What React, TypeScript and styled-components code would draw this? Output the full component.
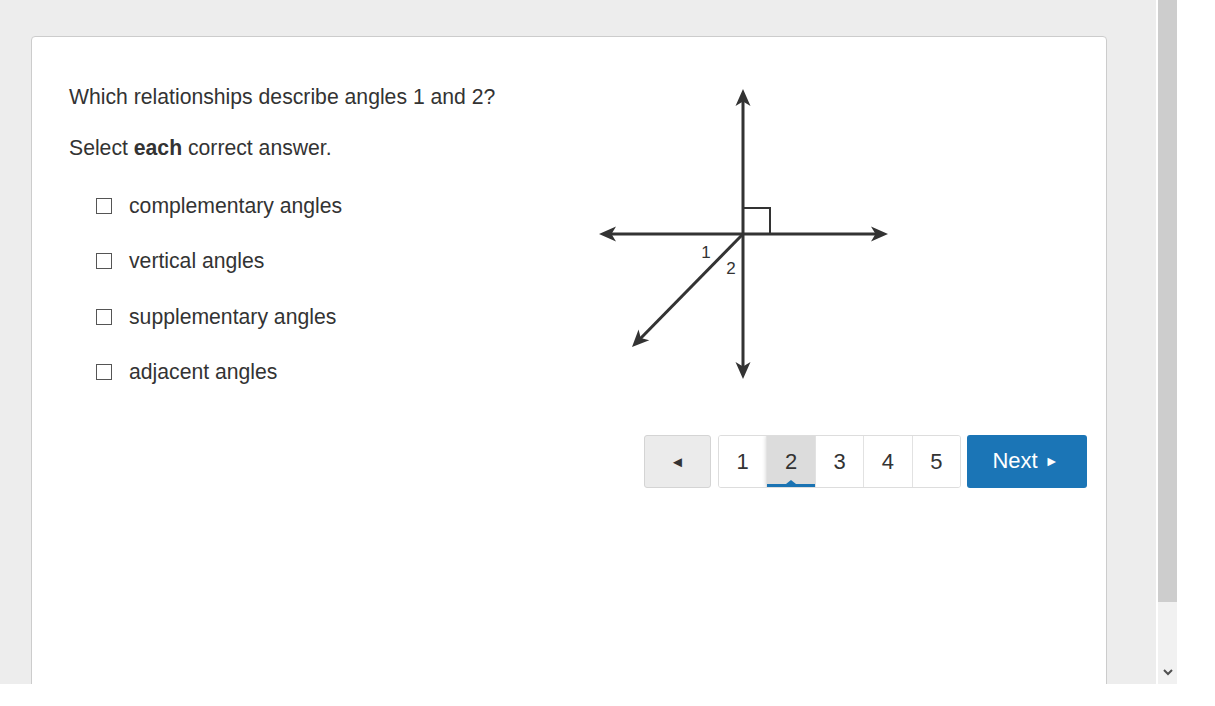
import styled, { createGlobalStyle } from "styled-components";

const GlobalStyle = createGlobalStyle`
  html, body {
    margin: 0;
    padding: 0;
    background: #ffffff;
  }
  body {
    font-family: "Liberation Sans", Arial, sans-serif;
    color: #333333;
  }
`;

// Browser viewport with its own scrollbar
const Viewport = styled.div`
  width: 1177px;
  height: 684px;
  display: flex;
  gap: 2px;
  background: #ffffff;
  overflow: hidden;
`;

const Main = styled.div`
  flex: 1;
  background: #ededed;
  padding: 36px 0 0 31px;
  overflow: hidden;
`;

const Scrollbar = styled.div`
  width: 19px;
  display: flex;
  flex-direction: column;
  background: #f1f1f1;
`;

const Thumb = styled.div`
  height: 602px;
  background: #cdcdcd;
`;

const ScrollArrow = styled.div`
  flex: 1;
  display: flex;
  align-items: flex-end;
  justify-content: center;
  padding-bottom: 8px;
`;

const Card = styled.div`
  width: 1076px;
  min-height: 700px;
  background: #ffffff;
  border: 1px solid #cccccc;
  border-radius: 4px;
  padding: 45px 19px 0 37px;
  box-sizing: border-box;
`;

const Content = styled.div`
  display: flex;
`;

const Question = styled.div`
  width: 529px;
  padding-top: 1px;
`;

const Prompt = styled.p<{ $gap?: number }>`
  margin: 0 0 ${(p) => p.$gap ?? 0}px;
  font-size: 21.2px;
  line-height: 28px;
`;

const Options = styled.ul`
  list-style: none;
  margin: 0;
  padding: 0 0 0 27px;
  display: flex;
  flex-direction: column;
  gap: 27.4px;
`;

const Option = styled.li`
  display: flex;
  align-items: center;
  gap: 17px;
  font-size: 21.2px;
  line-height: 28px;
`;

const Box = styled.span`
  width: 14px;
  height: 14px;
  border: 1px solid #555555;
  background: #ffffff;
  flex-shrink: 0;
`;

const Figure = styled.svg`
  display: block;
  margin-top: 6px;
`;

const Pager = styled.nav`
  display: flex;
  justify-content: flex-end;
  margin-top: 49px;
`;

const PrevButton = styled.button`
  width: 67px;
  height: 53px;
  margin-right: 7px;
  border: 1px solid #d4d4d4;
  border-radius: 3px;
  background: #ebebeb;
  color: #333333;
  font-size: 15px;
  display: flex;
  align-items: center;
  justify-content: center;
  padding: 0;
`;

const Pages = styled.div`
  display: flex;
  width: 243px;
  height: 53px;
  border: 1px solid #dddddd;
  border-radius: 3px;
  box-sizing: border-box;
  overflow: hidden;
`;

const Page = styled.button<{ $active?: boolean }>`
  position: relative;
  flex: 1;
  height: 100%;
  border: none;
  border-left: 1px solid #e2e2e2;
  padding: 0;
  background: ${(p) => (p.$active ? "#dcdcdc" : "#ffffff")};
  box-shadow: ${(p) => (p.$active ? "0 0 4px rgba(0,0,0,0.18)" : "none")};
  font-family: "Liberation Sans", Arial, sans-serif;
  font-size: 22px;
  color: #333333;

  &:first-child {
    border-left: none;
  }
`;

const ActiveBar = styled.span`
  position: absolute;
  left: 0;
  right: 0;
  bottom: 0;
  height: 3px;
  background: #1a73b3;

  &::after {
    content: "";
    position: absolute;
    left: 50%;
    top: -4px;
    margin-left: -5px;
    border-left: 5px solid transparent;
    border-right: 5px solid transparent;
    border-bottom: 4px solid #1a73b3;
  }
`;

const NextButton = styled.button`
  width: 120px;
  height: 53px;
  margin-left: 6px;
  border: none;
  border-radius: 3px;
  background: #1b75b6;
  color: #ffffff;
  font-family: "Liberation Sans", Arial, sans-serif;
  font-size: 22px;
  display: flex;
  align-items: center;
  justify-content: center;
  gap: 7px;
  padding: 0 3px 1px 0;
`;

const Caret = styled.span`
  font-size: 14px;
`;

const INK = "#333333";

function Arrow({ x, y, angle }: { x: number; y: number; angle: number }) {
  return (
    <path
      d="M0 0 L7.5 17 L0 12.5 L-7.5 17 Z"
      fill={INK}
      transform={`translate(${x} ${y}) rotate(${angle})`}
    />
  );
}

function AnglesFigure() {
  const cx = 145;
  const cy = 146;
  return (
    <Figure width="292" height="292" viewBox="0 0 292 292">
      <g stroke={INK} strokeWidth="3" fill="none">
        <line x1={cx} y1={10} x2={cx} y2={282} />
        <line x1={10} y1={cy} x2={281} y2={cy} />
        <line x1={cx} y1={cy} x2={41} y2={252} />
      </g>
      <path d={`M${cx} 120 H172 V${cy}`} stroke={INK} strokeWidth="2" fill="none" />
      <Arrow x={cx} y={1} angle={0} />
      <Arrow x={cx} y={291} angle={180} />
      <Arrow x={1} y={cy} angle={-90} />
      <Arrow x={290} y={cy} angle={90} />
      <Arrow x={34} y={259} angle={-135.5} />
      <text x="108" y="170" fontSize="17" fill={INK} textAnchor="middle" fontFamily="Liberation Sans, Arial, sans-serif">
        1
      </text>
      <text x="133" y="186" fontSize="17" fill={INK} textAnchor="middle" fontFamily="Liberation Sans, Arial, sans-serif">
        2
      </text>
    </Figure>
  );
}

const answers = ["complementary angles", "vertical angles", "supplementary angles", "adjacent angles"];

export default function App() {
  return (
    <>
      <GlobalStyle />
      <Viewport>
        <Main>
          <Card>
            <Content>
              <Question>
                <Prompt $gap={23}>Which relationships describe angles 1 and 2?</Prompt>
                <Prompt $gap={30}>
                  Select <b>each</b> correct answer.
                </Prompt>
                <Options>
                  {answers.map((a) => (
                    <Option key={a}>
                      <Box />
                      {a}
                    </Option>
                  ))}
                </Options>
              </Question>
              <AnglesFigure />
            </Content>
            <Pager>
              <PrevButton aria-label="Previous">◄</PrevButton>
              <Pages>
                {[1, 2, 3, 4, 5].map((n) => (
                  <Page key={n} $active={n === 2}>
                    {n}
                    {n === 2 && <ActiveBar />}
                  </Page>
                ))}
              </Pages>
              <NextButton>
                Next <Caret>►</Caret>
              </NextButton>
            </Pager>
          </Card>
        </Main>
        <Scrollbar>
          <Thumb />
          <ScrollArrow>
            <svg width="10" height="7" viewBox="0 0 10 7">
              <path d="M1 1 L5 5 L9 1" stroke="#505050" strokeWidth="2" fill="none" />
            </svg>
          </ScrollArrow>
        </Scrollbar>
      </Viewport>
    </>
  );
}
